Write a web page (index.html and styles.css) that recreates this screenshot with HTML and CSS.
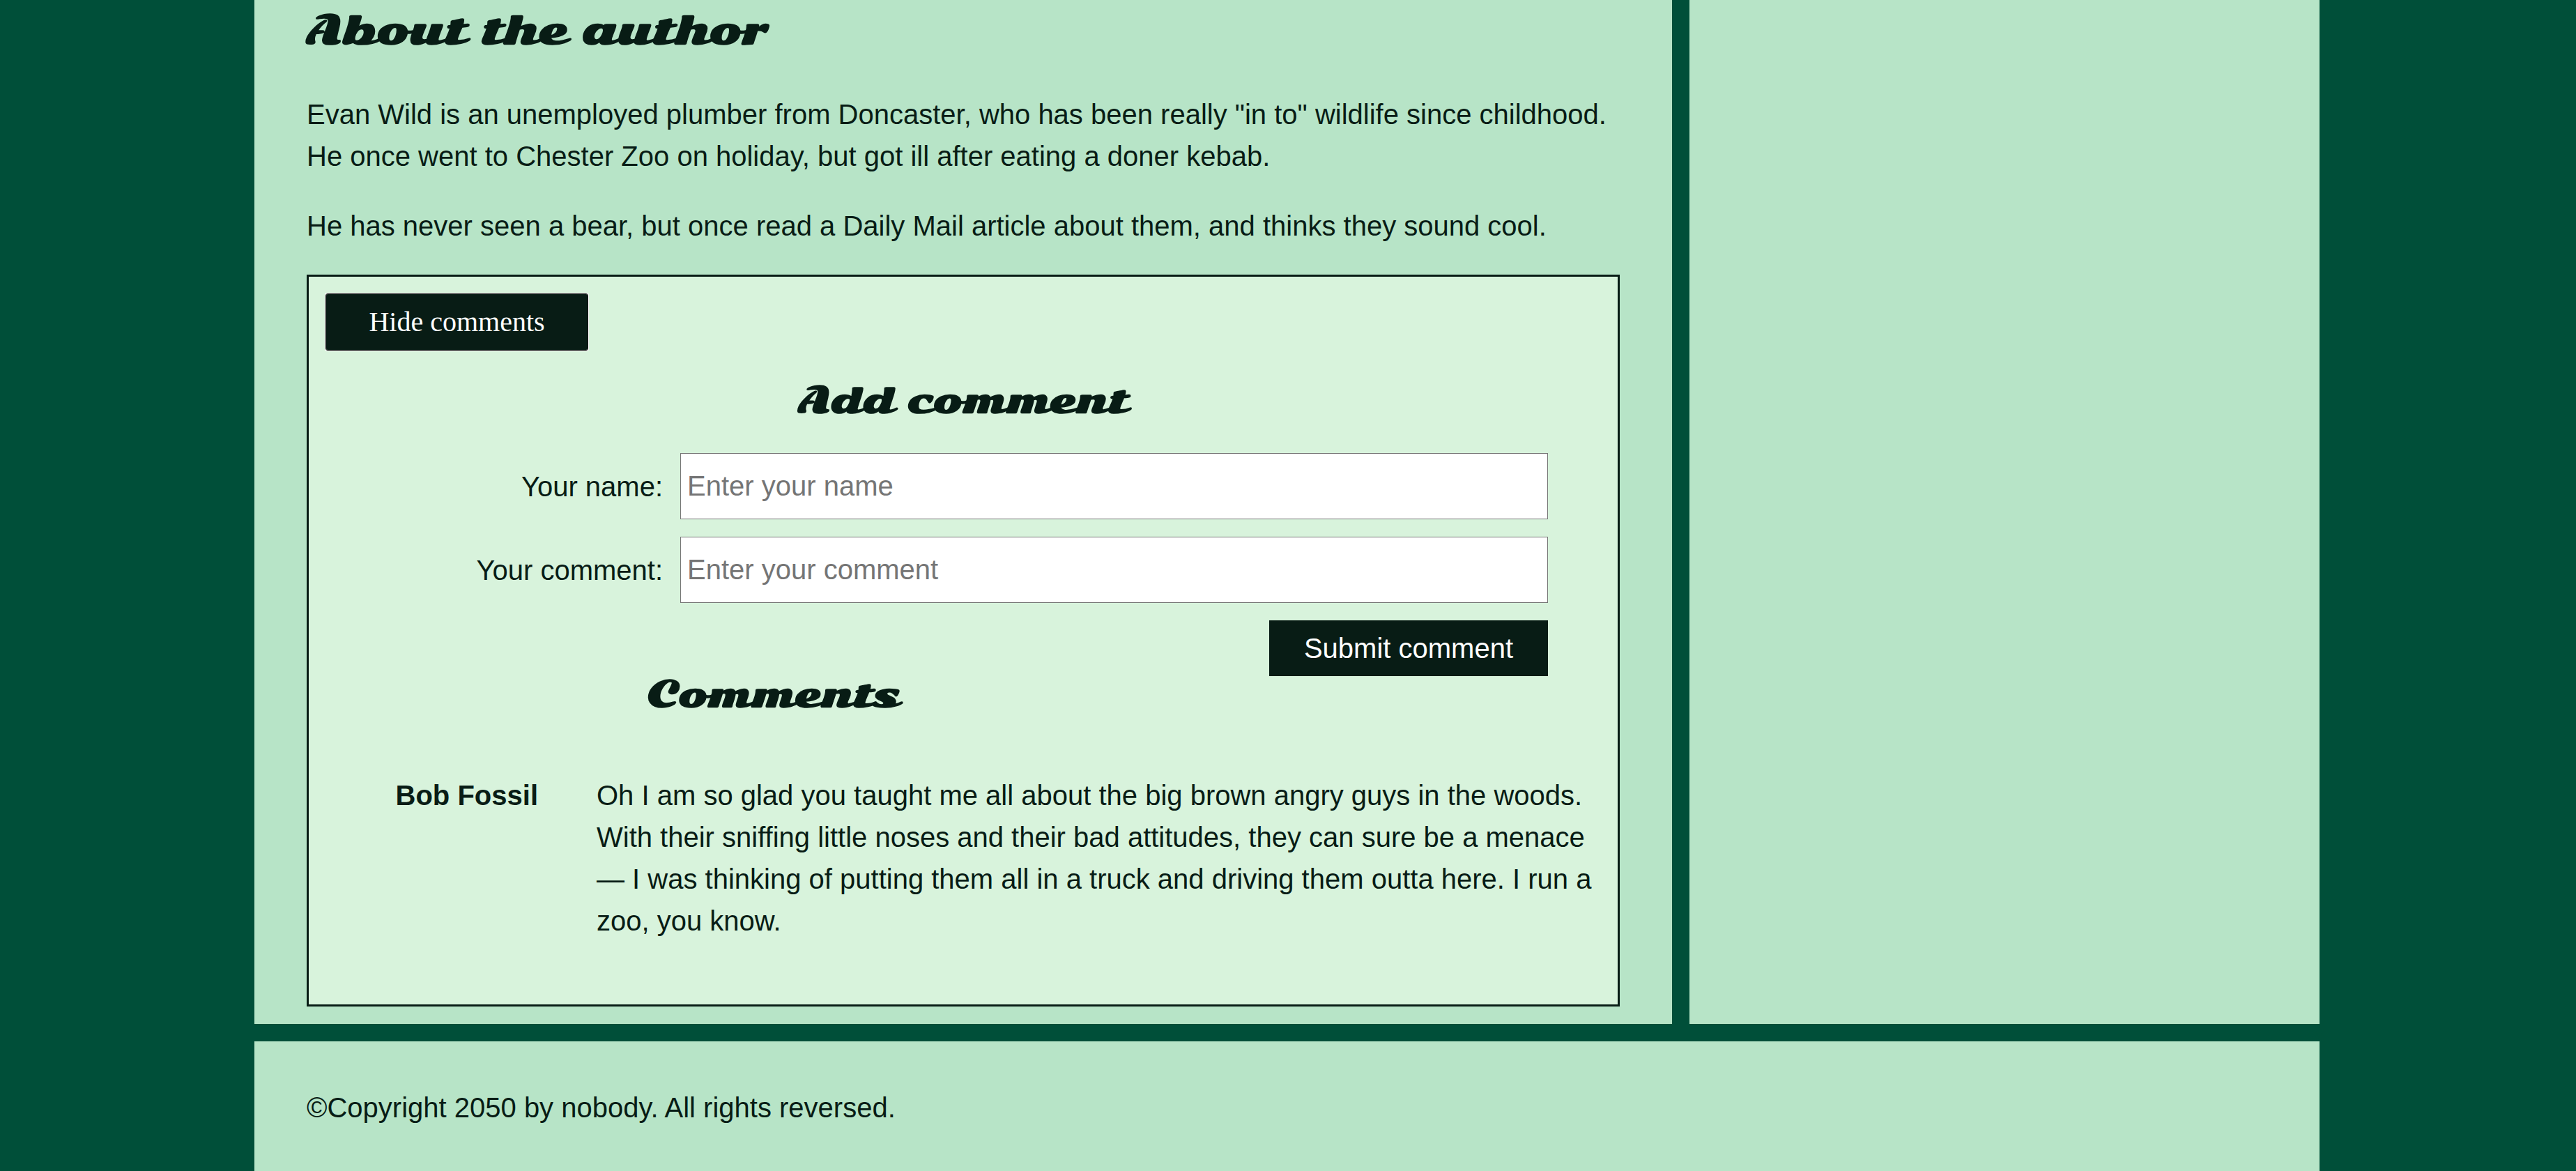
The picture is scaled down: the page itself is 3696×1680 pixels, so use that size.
FILE: index.html
```html
<!DOCTYPE html>
<html lang="en">
<head>
<meta charset="utf-8">
<title>About the author</title>
<link rel="stylesheet" href="styles.css">
</head>
<body>
<div class="columns">
  <main class="article">
    <h2 class="title">About the author</h2>
    <p class="text">Evan Wild is an unemployed plumber from Doncaster, who has been really "in to" wildlife since childhood. He once went to Chester Zoo on holiday, but got ill after eating a doner kebab.</p>
    <p class="text">He has never seen a bear, but once read a Daily Mail article about them, and thinks they sound cool.</p>
    <section class="comments">
      <button class="toggle" type="button">Hide comments</button>
      <form class="form">
        <h3 class="subtitle">Add comment</h3>
        <label class="label" for="name">Your name:</label>
        <input class="field" id="name" type="text" placeholder="Enter your name">
        <label class="label" for="comment">Your comment:</label>
        <input class="field" id="comment" type="text" placeholder="Enter your comment">
        <button class="submit" type="submit">Submit comment</button>
      </form>
      <h3 class="subtitle list-title">Comments</h3>
      <ul class="list">
        <li class="entry">
          <strong class="author">Bob Fossil</strong>
          <p class="message">Oh I am so glad you taught me all about the big brown angry guys in the woods. With their sniffing little noses and their bad attitudes, they can sure be a menace — I was thinking of putting them all in a truck and driving them outta here. I run a zoo, you know.</p>
        </li>
      </ul>
    </section>
  </main>
  <aside class="sidebar"></aside>
</div>
<footer class="footer">
  <p class="copyright">©Copyright 2050 by nobody. All rights reversed.</p>
</footer>
</body>
</html>
```

FILE: styles.css
```css
* {
  box-sizing: border-box;
}

body {
  display: flex;
  flex-direction: column;
  gap: 25px;
  min-height: 100vh;
  margin: 0;
  padding: 0 368px 0 365px;
  background: #004f39;
  color: #081c15;
  font: 40px/60px "Liberation Sans", Arial, sans-serif;
}

h2, h3, p, ul {
  margin: 0;
  padding: 0;
}

.columns {
  display: grid;
  grid-template-columns: minmax(0, 9fr) minmax(0, 4fr);
  gap: 25px;
}

.article {
  padding: 14px 75px 25px;
  background: #b7e4c7;
}

.sidebar {
  background: #b7e4c7;
}

.title,
.subtitle {
  font-family: "Sonsie One", "DejaVu Serif", serif;
  font-weight: bold;
  line-height: 60px;
}

.title {
  margin-bottom: 60px;
  font-size: 55px;
}

.subtitle {
  font-size: 50px;
  text-align: center;
}

.text {
  margin-bottom: 40px;
}

.comments {
  padding: 25px;
  border: 3px solid #081c15;
  background: #d8f3dc;
}

.toggle {
  display: block;
  width: 375px;
  height: 80px;
  padding: 0;
  border: 0;
  border-radius: 2px;
  outline: 1px solid #101010;
  box-shadow: 0 0 0 2px #fff;
  background: #081c15;
  color: #fff;
  font: 40px/60px "Liberation Serif", "Times New Roman", serif;
}

.form {
  display: grid;
  grid-template-columns: 408px 1fr;
  gap: 25px;
  padding: 43px 75px 0;
}

.form .subtitle {
  grid-column: 1 / -1;
  margin-bottom: 20px;
}

.label {
  align-self: center;
  text-align: right;
}

.field {
  width: 100%;
  height: 95px;
  padding: 0 9px;
  border: 1px solid #767676;
  border-radius: 0;
  background: #fff;
  color: #081c15;
  font: inherit;
}

.field::placeholder {
  color: #757575;
}

.submit {
  grid-column: 2;
  justify-self: end;
  width: 400px;
  height: 80px;
  padding: 0;
  border: 0;
  background: #081c15;
  color: #fff;
  font: inherit;
}

.list-title {
  margin: -3px 546px 84px 0;
}

.list {
  padding-bottom: 65px;
  list-style: none;
}

.entry {
  display: grid;
  grid-template-columns: 304px 1fr;
  gap: 84px;
}

.author {
  text-align: right;
}

.footer {
  flex: 1;
  padding: 65px 75px 25px;
  background: #b7e4c7;
}
```
